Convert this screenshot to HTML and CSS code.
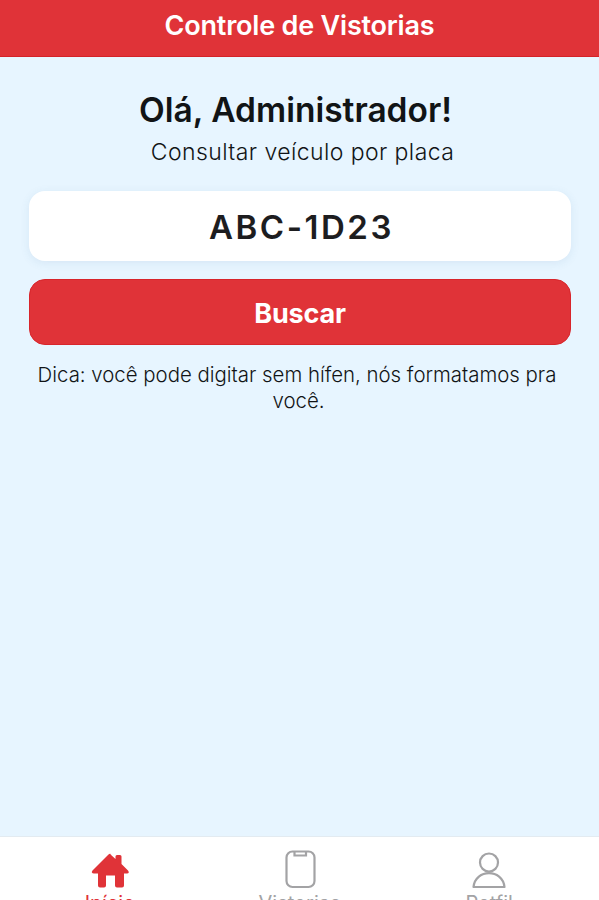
FILE: index.html
```html
<!DOCTYPE html>
<html lang="pt-BR">
<head>
  <meta charset="UTF-8">
  <title>Controle de Vistorias</title>
  <meta name="viewport" content="width=device-width, initial-scale=1.0">
  <link rel="stylesheet" href="styles.css">
</head>
<body>

<header class="topbar"><span>Controle de Vistorias</span></header>

<main class="content">
  <h1><span>Olá, Administrador!</span></h1>
  <p class="subtitle"><span>Consultar veículo por placa</span></p>

  <div class="plate"><span>ABC-1D23</span></div>
  <button class="search" type="button"><span>Buscar</span></button>

  <p class="hint"><span>Dica: você pode digitar sem hífen, nós formatamos pra</span> <span class="hint-end">você.</span></p>
</main>

<nav class="tabbar">
  <a class="tab active">
    <svg width="40" height="40" viewBox="0 0 40 40">
      <path d="M20 5 L25.500 10 V7.500 Q25.500 6 27 6 H30 Q31.500 6 31.500 7.500 V15 L38 21.500 Q40 24 37 24.500 H34 V36.500 Q34 38.500 32 38.500 H27 Q25 38.500 25 36.500 V26.500 H16 V36.500 Q16 38.500 14 38.500 H10 Q8 38.500 8 36.500 V24.500 H4 Q0.500 24 2.500 21.500 L18.500 5.500 Q20 4 21.500 5.500 Z" fill="#e03338"/>
    </svg>
    <span>Início</span>
  </a>
  <a class="tab">
    <svg width="40" height="40" viewBox="0 0 40 40" fill="none" stroke="#a3a3a5" stroke-width="2.200">
      <rect x="6.500" y="2.500" width="28" height="35.500" rx="6"/>
      <path d="M14.500 2.500 V6.500 H26 V2.500"/>
    </svg>
    <span>Vistorias</span>
  </a>
  <a class="tab">
    <svg width="40" height="40" viewBox="0 0 40 40" fill="none" stroke="#a3a3a5" stroke-width="2.200">
      <circle cx="20" cy="13.500" r="9"/>
      <path d="M4.500 38 C6.500 19.500 33.500 19.500 35.500 38 Z" stroke-linejoin="round"/>
    </svg>
    <span>Petfil</span>
  </a>
</nav>

</body>
</html>
```
FILE: styles.css
```css
* {
  box-sizing: border-box;
}

body {
  margin: 0;
  height: 900px;
  overflow: hidden;
  display: flex;
  flex-direction: column;
  font-family: Inter, "Liberation Sans", sans-serif;
  background: #e7f5ff;
  color: #111416;
}

.topbar {
  height: 57px;
  flex: none;
  padding-top: 9px;
  background: #e03338;
  border-bottom: 1px solid #d42228;
  color: white;
  font-size: 27px;
  font-weight: 600;
  line-height: 34px;
  letter-spacing: -0.2px;
  text-align: center;
}

.content {
  flex: 1;
  padding: 32px 28px 0 29px;
  text-align: center;
}

h1 {
  margin: 0 9px 0 0;
  font-size: 33.5px;
  font-weight: 600;
  line-height: 42px;
}

.subtitle {
  margin: 6px 0 0 5px;
  font-size: 23px;
  font-weight: 300;
  line-height: 30px;
  letter-spacing: 0.42px;
}

.plate {
  height: 70px;
  margin-top: 24px;
  padding-left: 3px;
  border-radius: 16px;
  background: white;
  box-shadow: 0 2px 10px rgba(60, 110, 160, 0.1);
  color: #1d1d1f;
  font-size: 33px;
  font-weight: 600;
  line-height: 72px;
  letter-spacing: 2.5px;
}

.search {
  display: block;
  width: 100%;
  height: 66px;
  margin-top: 18px;
  padding: 2px 0 0;
  border: 1px solid #d8252b;
  border-radius: 16px;
  background: #e03338;
  color: white;
  font-family: inherit;
  font-size: 27px;
  font-weight: 700;
  letter-spacing: -0.2px;
}

.hint {
  margin: 17px 6px 0 0;
  font-size: 20.4px;
  font-weight: 350;
  line-height: 26px;
}

.hint-end {
  display: block;
  padding-left: 3px;
}

.tabbar {
  height: 64px;
  flex: none;
  display: flex;
  padding: 12px 15px 0;
  border-top: 1px solid #e3ebf1;
  background: white;
}

.tab {
  flex: 1;
  display: flex;
  flex-direction: column;
  align-items: center;
  gap: 2px;
  color: #a3a3a5;
  font-size: 20px;
  line-height: 24px;
}

.tab svg {
  flex: none;
}

.active {
  color: #e03338;
}
```
